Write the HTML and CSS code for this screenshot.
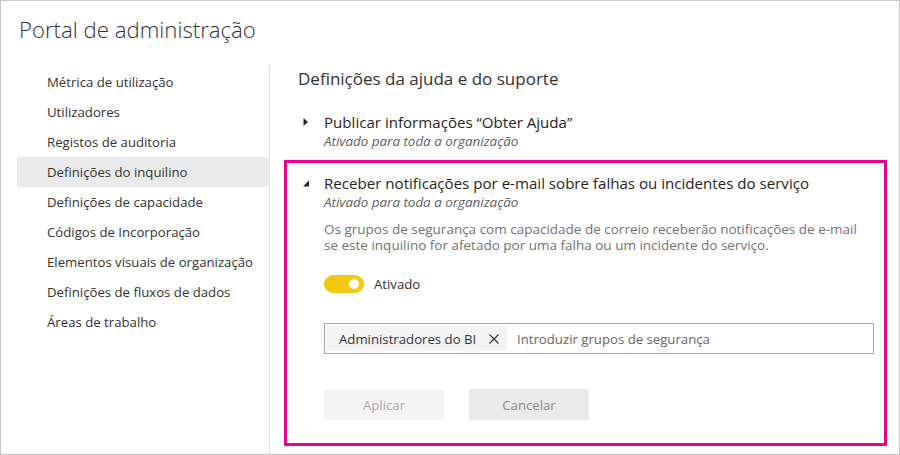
FILE: index.html
```html
<!DOCTYPE html>
<html lang="pt">
<head>
<meta charset="utf-8">
<title>Portal de administração</title>
<link rel="stylesheet" href="styles.css">
</head>
<body>
<div class="frame">
  <h1 class="title">Portal de administração</h1>
  <div class="body">
    <nav class="sidebar">
      <div class="nav-item">Métrica de utilização</div>
      <div class="nav-item">Utilizadores</div>
      <div class="nav-item">Registos de auditoria</div>
      <div class="nav-item selected">Definições do inquilino</div>
      <div class="nav-item">Definições de capacidade</div>
      <div class="nav-item">Códigos de Incorporação</div>
      <div class="nav-item">Elementos visuais de organização</div>
      <div class="nav-item">Definições de fluxos de dados</div>
      <div class="nav-item">Áreas de trabalho</div>
    </nav>
    <main class="main">
      <h2 class="section-title">Definições da ajuda e do suporte</h2>
      <div class="setting collapsed">
        <div class="setting-head">
          <span class="caret-box"><svg class="caret" width="8" height="10" viewBox="0 0 8 10"><path d="M1.5 1 L6 5 L1.5 9 Z" fill="#1f2a44"/></svg></span>
          <div class="setting-name">Publicar informações “Obter Ajuda”</div>
        </div>
        <div class="setting-sub">Ativado para toda a organização</div>
      </div>
      <div class="setting expanded">
        <div class="setting-head">
          <span class="caret-box"><svg class="caret" width="8" height="10" viewBox="0 0 8 10"><path d="M7 2.5 L7 8.5 L1 8.5 Z" fill="#252423"/></svg></span>
          <div class="setting-name">Receber notificações por e-mail sobre falhas ou incidentes do serviço</div>
        </div>
        <div class="setting-sub">Ativado para toda a organização</div>
        <p class="desc"><span class="line">Os grupos de segurança com capacidade de correio receberão notificações de e-mail</span> <span class="line">se este inquilino for afetado por uma falha ou um incidente do serviço.</span></p>
        <div class="toggle-row">
          <span class="toggle"><span class="knob"></span></span>
          <span class="toggle-label">Ativado</span>
        </div>
        <div class="picker">
          <span class="chip">Administradores do BI
            <svg class="chip-x" width="12" height="12" viewBox="0 0 12 12"><path d="M1.5 1.5 L10.5 10.5 M10.5 1.5 L1.5 10.5" stroke="#333" stroke-width="1.2"/></svg>
          </span>
          <span class="placeholder">Introduzir grupos de segurança</span>
        </div>
        <div class="buttons">
          <button class="btn apply">Aplicar</button>
          <button class="btn cancel">Cancelar</button>
        </div>
      </div>
    </main>
  </div>
</div>
</body>
</html>
```
FILE: styles.css
```css
* { box-sizing: border-box; }
html, body { margin: 0; padding: 0; background: #fff; }
body { font-family: "Open Sans", "Noto Sans", sans-serif; color: #333; }
.frame {
  width: 900px; height: 455px;
  border: 1px solid #c6c6c6;
  display: flex; flex-direction: column;
  overflow: hidden;
}
.title {
  margin: 0;
  padding: 12px 0 0 18px;
  height: 64px;
  font-size: 22.2px;
  font-weight: 300;
  color: #333;
  line-height: 34px;
}
.body { display: flex; flex: 1; }
.sidebar { width: 252px; margin-left: 16px; padding-top: 2px; }
.nav-item {
  height: 30px; line-height: 30px;
  padding-left: 30px;
  font-size: 13.2px;
  color: #333;
}
.nav-item.selected { background: #eaeaea; }
.main {
  flex: 1;
  border-left: 1px solid #e1e1e1;
  padding: 0 12px 8px 14px;
  display: flex; flex-direction: column;
}
.section-title {
  margin: 0;
  padding: 2px 0 0 14px;
  font-size: 17px;
  font-weight: 400;
  line-height: 24px;
  height: 44px;
  color: #333;
}
.setting { padding-left: 40px; }
.setting.collapsed { height: 51px; padding-top: 3px; }
.setting.expanded {
  flex: 1;
  border: 3px solid #ec008c;
  padding: 10px 0 0 37px;
}
.setting-head { display: flex; align-items: center; height: 20px; margin-left: -40px; }
.expanded .setting-head { margin-left: -37px; }
.caret-box { width: 40px; display: flex; justify-content: flex-end; padding-right: 14px; }
.expanded .caret-box { width: 37px; }
.caret { width: 8px; height: 10px; }
.setting-name { font-size: 15.1px; line-height: 20px; color: #252423; }
.setting-sub { font-size: 13.4px; font-style: italic; color: #605e5c; line-height: 18px; }
.desc {
  margin: 10px 0 0 0;
  font-size: 13.5px;
  color: #737373;
  width: 545px;
  display: flex; flex-direction: column;
}
.desc .line { display: block; height: 16px; line-height: 16px; white-space: nowrap; }
.toggle-row { display: flex; align-items: center; margin-top: 21px; height: 20px; }
.toggle {
  width: 40px; height: 18px;
  border-radius: 9px;
  background: #f2c811;
  position: relative;
  margin-right: 10px;
}
.knob {
  position: absolute; right: 5px; top: 4px;
  width: 10px; height: 10px; border-radius: 50%;
  background: #fff;
}
.toggle-label { font-size: 13.2px; color: #333; }
.picker {
  margin-top: 29px;
  width: 550px; height: 31px;
  border: 1px solid #a6a6a6;
  display: flex; align-items: center;
  padding: 2px;
}
.chip {
  height: 25px; width: 180px;
  background: #f3f3f3;
  display: flex; align-items: center;
  padding-left: 12px;
  font-size: 13.2px; color: #333;
}
.chip-x { margin-left: 12px; }
.placeholder { margin-left: 10px; font-size: 13.2px; color: #666; }
.buttons { display: flex; gap: 25px; margin-top: 35px; }
.btn {
  width: 120px; height: 31px;
  border: none;
  font-family: inherit;
  font-size: 13.2px;
}
.btn.apply { background: #f4f4f4; color: #a6a6a6; }
.btn.cancel { background: #eaeaea; color: #888; }
```
